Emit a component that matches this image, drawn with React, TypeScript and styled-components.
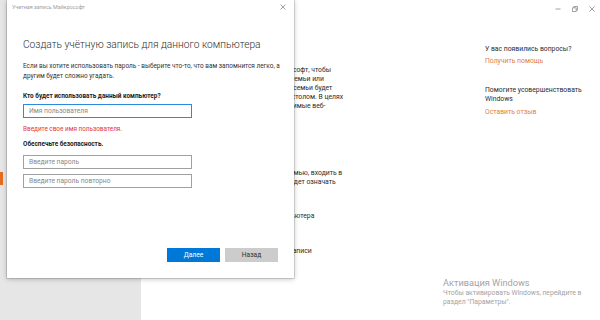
import * as React from 'react';
import styled, { createGlobalStyle } from 'styled-components';

const GlobalStyle = createGlobalStyle`
  html, body {
    margin: 0;
    padding: 0;
    background: #ffffff;
  }
  body {
    font-family: Roboto, "Noto Sans", sans-serif;
    color: #1f1f1f;
  }
`

const Window = styled.div`
  position: relative;
  display: flex;
  width: 600px;
  height: 320px;
  overflow: hidden;
  background: #ffffff;
`

const Sidebar = styled.div`
  width: 141px;
  flex-shrink: 0;
  background: #e6e6e6;
  padding-top: 172px;
  box-sizing: border-box;
`

const NavMarker = styled.div`
  width: 3px;
  height: 13px;
  background: #e46b1f;
`

const Main = styled.div`
  flex: 1;
  display: flex;
  flex-direction: column;
`

const WindowControls = styled.div`
  display: flex;
  justify-content: flex-end;
  align-items: center;
  height: 14px;
  padding-top: 2px;
  gap: 11px;
  padding-right: 5px;
`

const ControlIcon = styled.svg`
  width: 6px;
  height: 6px;
  stroke: #8a8a8a;
  stroke-width: 0.8;
  fill: none;
`

const Content = styled.div`
  flex: 1;
  display: flex;
`

const PageColumn = styled.div`
  flex: 1;
  padding: 50px 0 0 41px;
  font-size: 6.8px;
  line-height: 9px;
  color: #2b2b2b;
  white-space: nowrap;
`

const TextBlock = styled.div<{ $gap: number }>`
  margin-top: ${(p) => p.$gap}px;
`

const Aside = styled.div`
  width: 115px;
  flex-shrink: 0;
  padding-top: 29px;
  font-size: 6.8px;
  line-height: 9px;
  color: #2b2b2b;
`

const AsideText = styled.div<{ $gap?: number }>`
  margin-top: ${(p) => p.$gap ?? 0}px;
`

const AsideLink = styled.div<{ $gap: number }>`
  margin-top: ${(p) => p.$gap}px;
  color: #e0803f;
`

const Watermark = styled.div`
  position: absolute;
  left: 443px;
  top: 276px;
  color: #a3a3a3;
  font-size: 6.8px;
  line-height: 9px;
`

const WatermarkTitle = styled.div`
  font-size: 9.2px;
  line-height: 13px;
`

const Dialog = styled.div`
  position: absolute;
  left: 7px;
  top: 0;
  width: 287px;
  height: 278px;
  background: #ffffff;
  box-shadow: 0 0 0 1px rgba(0, 0, 0, 0.12), 0 1px 5px rgba(0, 0, 0, 0.25);
  display: flex;
  flex-direction: column;
  box-sizing: border-box;
`

const DialogTitleBar = styled.div`
  display: flex;
  justify-content: space-between;
  align-items: center;
  height: 14px;
  padding: 0 8px 0 5px;
  font-size: 5.4px;
  color: #a0a0a0;
`

const DialogBody = styled.div`
  flex: 1;
  display: flex;
  flex-direction: column;
  padding: 22px 3px 16px 16px;
`

const Heading = styled.h1`
  margin: 0;
  font-size: 10.2px;
  line-height: 17px;
  font-weight: 300;
  color: #2e2e2e;
  white-space: nowrap;
`

const Paragraph = styled.p`
  margin: 8px 0 0 0;
  font-size: 6.45px;
  line-height: 10px;
  color: #333333;
`

const Label = styled.div<{ $gap: number }>`
  margin-top: ${(p) => p.$gap}px;
  font-size: 6.4px;
  line-height: 10px;
  font-weight: 700;
  color: #222222;
`

const Field = styled.input<{ $focused?: boolean; $gap: number }>`
  display: block;
  margin: ${(p) => p.$gap}px 0 0 0;
  width: 169px;
  height: 14px;
  box-sizing: border-box;
  padding: 0 5px;
  border: 1px solid ${(p) => (p.$focused ? '#2b8ae0' : '#a0a0a0')};
  outline: none;
  font-family: inherit;
  font-size: 6.7px;
  color: #333;
  background: #fff;
  &::placeholder {
    color: #8a8a8a;
  }
`

const ErrorText = styled.div`
  margin-top: 6px;
  font-size: 6.4px;
  line-height: 10px;
  color: #e0393e;
`

const Buttons = styled.div`
  margin-top: auto;
  margin-right: 13px;
  display: flex;
  justify-content: flex-end;
  gap: 5px;
`

const Button = styled.button<{ $primary?: boolean }>`
  width: 53px;
  height: 14px;
  border: none;
  padding: 0;
  font-family: inherit;
  font-size: 6.7px;
  color: ${(p) => (p.$primary ? '#ffffff' : '#333333')};
  background: ${(p) => (p.$primary ? '#0078d7' : '#cccccc')};
`

const CloseIcon = () => (
  <ControlIcon viewBox="0 0 6 6">
    <path d="M0.5 0.5 L5.5 5.5 M5.5 0.5 L0.5 5.5" />
  </ControlIcon>
)

export default function App() {
  return (
    <>
      <GlobalStyle />
      <Window>
        <Sidebar>
          <NavMarker />
        </Sidebar>
        <Main>
          <WindowControls>
            <ControlIcon viewBox="0 0 6 6">
              <path d="M0.5 3 H5.5" />
            </ControlIcon>
            <ControlIcon viewBox="0 0 6 6">
              <path d="M0.5 1.8 H4.2 V5.5 H0.5 Z M1.8 1.8 V0.5 H5.5 V4.2 H4.2" />
            </ControlIcon>
            <CloseIcon />
          </WindowControls>
          <Content>
            <PageColumn>
              <div>Войдите в учетную запись Майкрософт, чтобы</div>
              <div>добавлять детей и других членов семьи или</div>
              <div>Учетная запись для любого члена семьи будет</div>
              <div>управляться отдельным рабочим столом. В целях</div>
              <div>безопасности будут только допустимые веб-</div>
              <TextBlock $gap={58}>
                <div>Позвольте всем, не входящим в семью, входить в</div>
                <div>с их учетными записями. Это не будет означать</div>
              </TextBlock>
              <TextBlock $gap={25}>
                <div>Добавить пользователя для компьютера</div>
              </TextBlock>
              <TextBlock $gap={26}>
                <div>Сменить тип выбранной учетной записи</div>
              </TextBlock>
            </PageColumn>
            <Aside>
              <AsideText>У вас появились вопросы?</AsideText>
              <AsideLink $gap={3}>Получить помощь</AsideLink>
              <AsideText $gap={20}>Помогите усовершенствовать Windows</AsideText>
              <AsideLink $gap={4}>Оставить отзыв</AsideLink>
            </Aside>
          </Content>
        </Main>
        <Watermark>
          <WatermarkTitle>Активация Windows</WatermarkTitle>
          <div>Чтобы активировать Windows, перейдите в</div>
          <div>раздел "Параметры".</div>
        </Watermark>
        <Dialog>
          <DialogTitleBar>
            <span>Учетная запись Майкрософт</span>
            <CloseIcon />
          </DialogTitleBar>
          <DialogBody>
            <Heading>Создать учётную запись для данного компьютера</Heading>
            <Paragraph>
              Если вы хотите использовать пароль - выберите что-то, что вам запомнится легко, а
              другим будет сложно угадать.
            </Paragraph>
            <Label $gap={10}>Кто будет использовать данный компьютер?</Label>
            <Field $focused $gap={3} placeholder="Имя пользователя" />
            <ErrorText>Введите свое имя пользователя.</ErrorText>
            <Label $gap={5}>Обеспечьте безопасность.</Label>
            <Field $gap={6} placeholder="Введите пароль" />
            <Field $gap={5} placeholder="Введите пароль повторно" />
            <Buttons>
              <Button $primary>Далее</Button>
              <Button>Назад</Button>
            </Buttons>
          </DialogBody>
        </Dialog>
      </Window>
    </>
  )
}
